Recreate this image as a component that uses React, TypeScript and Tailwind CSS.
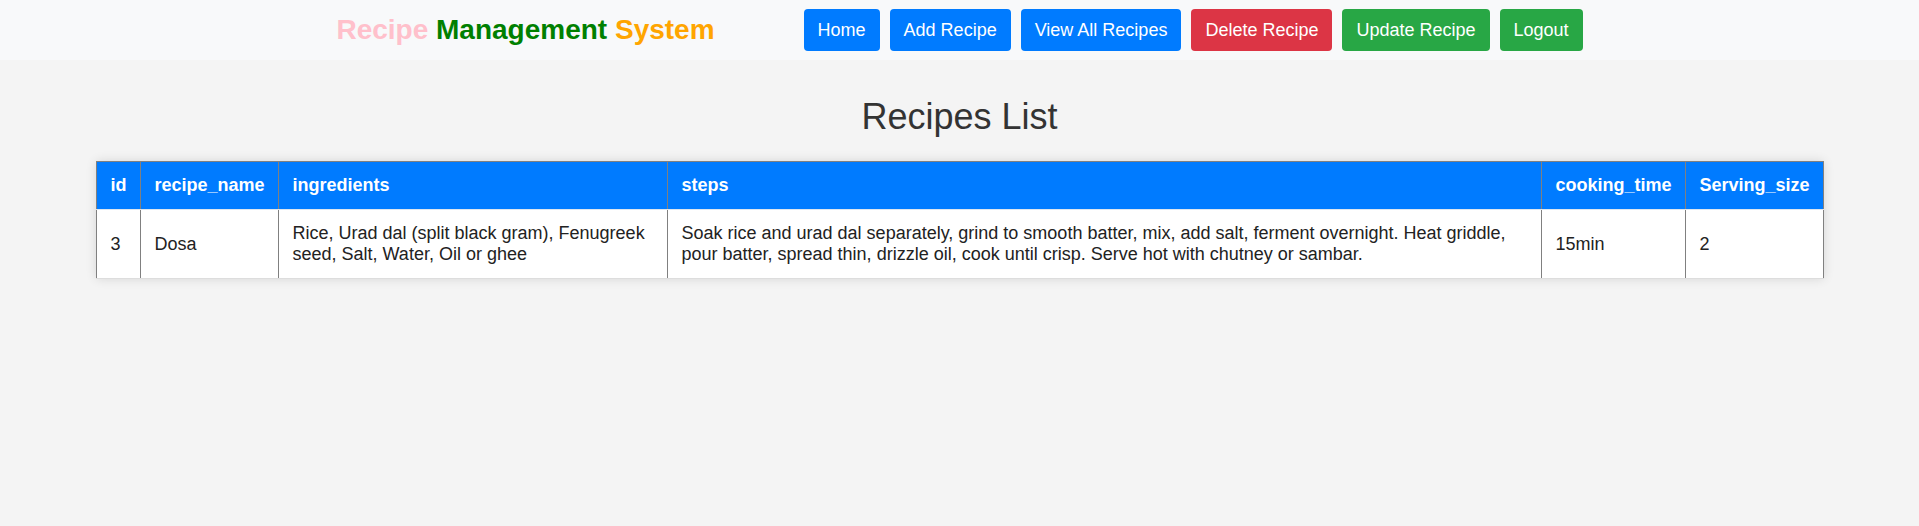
import React from "react";

const buttons = [
  { label: "Home", cls: "bg-[#007bff]" },
  { label: "Add Recipe", cls: "bg-[#007bff]" },
  { label: "View All Recipes", cls: "bg-[#007bff]" },
  { label: "Delete Recipe", cls: "bg-[#dc3545]" },
  { label: "Update Recipe", cls: "bg-[#28a745]" },
  { label: "Logout", cls: "bg-[#28a745]" },
];

const headers = ["id", "recipe_name", "ingredients", "steps", "cooking_time", "Serving_size"];
const widths = ["w-[44px]", "w-[138px]", "w-[389px]", "w-[874px]", "w-[144px]", "w-[138px]"];

const row = [
  "3",
  "Dosa",
  "Rice, Urad dal (split black gram), Fenugreek seed, Salt, Water, Oil or ghee",
  "Soak rice and urad dal separately, grind to smooth batter, mix, add salt, ferment overnight. Heat griddle, pour batter, spread thin, drizzle oil, cook until crisp. Serve hot with chutney or sambar.",
  "15min",
  "2",
];

export default function App() {
  return (
    <div
      className="min-h-[526px] bg-[#f4f4f4] text-[#333]"
      style={{ fontFamily: '"Liberation Sans", Arial, sans-serif' }}
    >
      <nav className="h-[60px] bg-[#f8f9fa] flex items-center justify-center">
        <h1 className="text-[28px] font-bold leading-[normal] m-0">
          <span className="text-[pink]">Recipe</span>{" "}
          <span className="text-[green]">Management</span>{" "}
          <span className="text-[orange]">System</span>
        </h1>
        <div className="ml-[89px] flex gap-[10px]">
          {buttons.map((b) => (
            <button
              key={b.label}
              className={`${b.cls} text-white text-[18px] leading-[26px] h-[42px] px-[14px] rounded-[4px] border-0`}
            >
              {b.label}
            </button>
          ))}
        </div>
      </nav>

      <h2 className="text-[36px] font-normal leading-[normal] text-center mt-[36px] mb-[23px] text-[#333]">
        Recipes List
      </h2>

      <table className="w-[90%] mx-auto border-collapse table-fixed bg-white shadow-[0_0_10px_rgba(0,0,0,0.12)]">
        <colgroup>
          {widths.map((w, i) => (
            <col key={i} className={w} />
          ))}
        </colgroup>
        <thead>
          <tr className="bg-[#007bff]">
            {headers.map((h) => (
              <th
                key={h}
                className="text-left text-white font-bold text-[18px] leading-[normal] px-[14px] py-[13px] border-x border-t border-[#808080] border-b border-b-[#dde6f0]"
              >
                {h}
              </th>
            ))}
          </tr>
        </thead>
        <tbody>
          <tr className="bg-white">
            {row.map((c, i) => (
              <td
                key={i}
                className="text-[18px] leading-[normal] px-[14px] py-[13px] align-middle text-[#222] border-x border-[#808080] border-b border-b-[#dddddd]"
              >
                {c}
              </td>
            ))}
          </tr>
        </tbody>
      </table>
    </div>
  );
}
